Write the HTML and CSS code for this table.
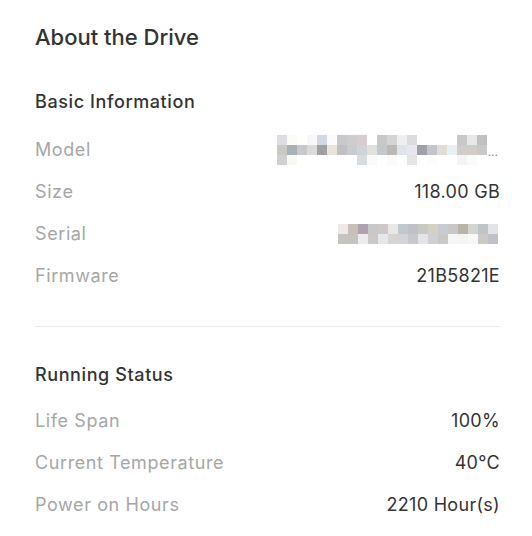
FILE: index.html
```html
<!DOCTYPE html>
<html lang="en">
<head>
  <meta charset="UTF-8" />
  <meta name="viewport" content="width=device-width, initial-scale=1.0"/>
  <title>About the Drive</title>
<link rel="stylesheet" href="styles.css">
</head>
<body>
  <main class="drive-panel">
    <h1 class="panel-title">About the Drive</h1>

    <section class="info-section">
      <h2>Basic Information</h2>
      <div class="info-row">
        <span class="label">Model</span>
        <span class="value">
          <span class="mosaic mosaic-model" id="mosaic-model"></span>
          <span class="dots">...</span>
        </span>
      </div>
      <div class="info-row">
        <span class="label">Size</span>
        <span class="value">118.00 GB</span>
      </div>
      <div class="info-row">
        <span class="label">Serial</span>
        <span class="value">
          <span class="mosaic mosaic-serial" id="mosaic-serial"></span>
        </span>
      </div>
      <div class="info-row">
        <span class="label">Firmware</span>
        <span class="value">21B5821E</span>
      </div>
    </section>

    <hr class="divider" />

    <section class="info-section running">
      <h2>Running Status</h2>
      <div class="info-row">
        <span class="label">Life Span</span>
        <span class="value">100%</span>
      </div>
      <div class="info-row">
        <span class="label">Current Temperature</span>
        <span class="value">40°C</span>
      </div>
      <div class="info-row">
        <span class="label">Power on Hours</span>
        <span class="value">2210 Hour(s)</span>
      </div>
    </section>
  </main>

  <script>
    // blurred (pixelated) values, one colour per cell
    const modelCells = [
      "#dcdde0","#fbfbf8","#fff","#f8f8f8","#d0d8e4","#fbfbfb","#c8c8cc","#d0cccc","#d8ccd0","#fff","#c8c8c8","#d4d4d4","#eeeeee","#dcdce0","#fff","#fff","#fff","#fff","#c8c8c8","#e8e8e8","#c0c0c4",
      "#c8c8c4","#a8b0b8","#c8c8cc","#dcdad8","#a0a0a0","#e8e4dc","#c0c0c4","#c8ccd0","#d0d4d8","#e0e0dc","#c4c8cc","#bcb8b8","#e0e4e8","#e8e8ec","#a0a0a8","#c4c4cc","#e0dcd8","#e8f0f4","#d0ccc8","#d0ccc8","#c8c8c8",
      "#d0d0d0","#f8f8f4","#fff","#fff","#fff","#fff","#fff","#fff","#d8dce0","#fafafa","#fff","#fafafa","#fff","#e4e4e4","#fff","#fdfdf8","#fff","#fff","#f4f4f4","#fafafa","#fff"
    ];
    const serialCells = [
      "#f0e8e4","#c8c0b8","#b0a0b0","#c8c8c8","#d0c8c8","#e8e8e8","#c0c8d0","#c0c0c8","#c8c8c4","#d4d0c8","#c8ccd0","#c8c8c8","#b8b4a8","#d4d4d0","#c0c4c8","#e4e4e8",
      "#c4c4c0","#c4c4bc","#ececec","#ccc8c8","#e4e8ec","#d8d4d4","#d4d4d8","#c8c8cc","#e4e4e8","#d0d0d4","#c8c8c8","#f4f6f8","#f4f4f0","#f8f8f8","#ccc8c8","#c0c0c8"
    ];

    function pintarMosaico(id, cores) {
      const alvo = document.getElementById(id);
      cores.forEach(cor => {
        const cell = document.createElement("i");
        cell.style.background = cor;
        alvo.appendChild(cell);
      });
    }

    pintarMosaico("mosaic-model", modelCells);
    pintarMosaico("mosaic-serial", serialCells);
  </script>
</body>
</html>
```

FILE: styles.css
```css
* {
  box-sizing: border-box;
}

body {
  margin: 0;
  background: #fff;
  font-family: Inter, 'Noto Sans', sans-serif;
  color: #333;
}

.drive-panel {
  padding: 22px 32px 20px 35px;
}

.panel-title {
  margin: 0;
  font-size: 22px;
  line-height: 30px;
  font-weight: 500;
  letter-spacing: 0;
  color: #333;
}

.info-section h2 {
  margin: 37px 0 14px;
  font-size: 18px;
  line-height: 26px;
  font-weight: 500;
  letter-spacing: 0.6px;
  color: #333;
}

.running h2 {
  margin: 35px 0 12px;
}

.info-row {
  display: flex;
  justify-content: space-between;
  align-items: center;
  height: 42px;
  padding-bottom: 2px;
  font-size: 18px;
}

.label {
  color: #a6a6a6;
  letter-spacing: 0.6px;
}

.value {
  color: #333;
  display: flex;
  align-items: flex-end;
  letter-spacing: 0.3px;
}

.mosaic {
  display: grid;
  grid-auto-rows: 10px;
}

.mosaic i {
  display: block;
}

.mosaic-model {
  grid-template-columns: repeat(21, 10px);
  margin-top: 2px;
}

.mosaic-serial {
  grid-template-columns: repeat(16, 10px);
  margin: 2px 2px 0 0;
}

.dots {
  font-size: 12px;
  line-height: 12px;
  color: #888;
  margin: 0 2px 7px 1px;
  letter-spacing: 0;
}

.divider {
  margin: 29px 0 0;
  border: none;
  border-top: 1px solid #ececec;
}
```
